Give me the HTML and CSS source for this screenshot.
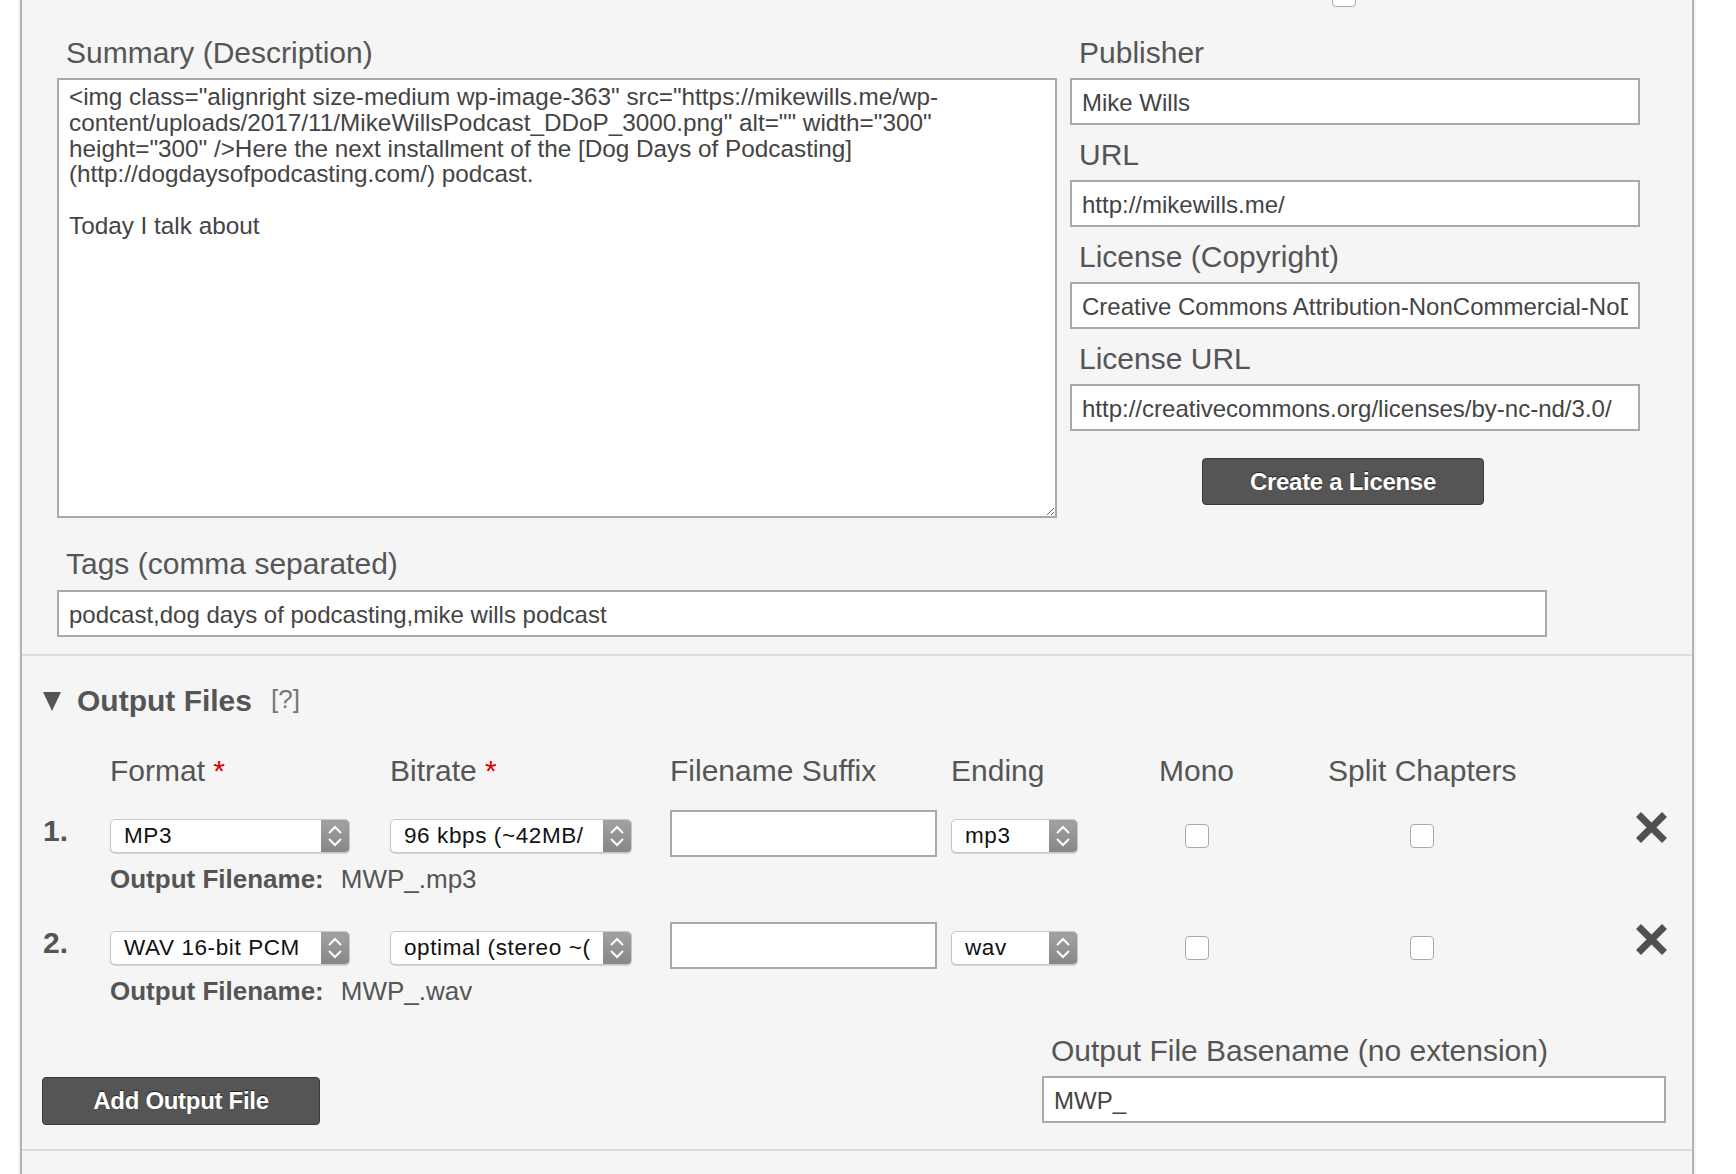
FILE: index.html
```html
<!DOCTYPE html>
<html lang="en">
<head>
<meta charset="utf-8">
<title>Podcast episode settings</title>
<link rel="stylesheet" href="styles.css">
</head>
<body>
<div class="panel">
  <div class="prev-row"><span class="check"></span></div>

  <section class="meta">
    <div class="meta-grid">
      <div class="col-left">
        <label class="lbl">Summary (Description)</label>
        <textarea class="summary">&lt;img class="alignright size-medium wp-image-363" src="https://mikewills.me/wp-
content/uploads/2017/11/MikeWillsPodcast_DDoP_3000.png" alt="" width="300"
height="300" /&gt;Here the next installment of the [Dog Days of Podcasting]
(http://dogdaysofpodcasting.com/) podcast.

Today I talk about</textarea>
      </div>
      <div class="col-right">
        <div class="field">
          <label class="lbl">Publisher</label>
          <input class="txt" type="text" value="Mike Wills">
        </div>
        <div class="field">
          <label class="lbl">URL</label>
          <input class="txt" type="text" value="http://mikewills.me/">
        </div>
        <div class="field">
          <label class="lbl">License (Copyright)</label>
          <input class="txt" type="text" value="Creative Commons Attribution-NonCommercial-NoDerivs 3.0 Unported">
        </div>
        <div class="field">
          <label class="lbl">License URL</label>
          <input class="txt" type="text" value="http://creativecommons.org/licenses/by-nc-nd/3.0/">
        </div>
        <button class="btn btn-license" type="button">Create a License</button>
      </div>
    </div>
    <div class="tags">
      <label class="lbl">Tags (comma separated)</label>
      <input class="txt tags-input" type="text" value="podcast,dog days of podcasting,mike wills podcast">
    </div>
  </section>

  <section class="outputs">
    <h2 class="out-head">
      <svg class="tri" width="18" height="20" viewBox="0 0 18 20"><polygon points="0,1 18,1 9,20" fill="#555"/></svg>
      <span class="out-title">Output Files</span>
      <span class="help">[?]</span>
    </h2>

    <div class="orow ohead">
      <div class="c c-num"></div>
      <div class="c c-fmt">Format <span class="req">*</span></div>
      <div class="c c-bit">Bitrate <span class="req">*</span></div>
      <div class="c c-suf">Filename Suffix</div>
      <div class="c c-end">Ending</div>
      <div class="c c-mono">Mono</div>
      <div class="c c-split">Split Chapters</div>
      <div class="c c-x"></div>
    </div>

    <div class="entry">
      <div class="orow orow-item">
        <div class="c c-num num">1.</div>
        <div class="c c-fmt">
          <div class="sel sel-fmt"><span class="sel-text">MP3</span><span class="sel-arrow"><svg width="28" height="32" viewBox="0 0 28 32"><polyline points="8,13 14,7 20,13" fill="none" stroke="#fff" stroke-width="2"/><polyline points="8,19 14,25 20,19" fill="none" stroke="#fff" stroke-width="2"/></svg></span></div>
        </div>
        <div class="c c-bit">
          <div class="sel sel-bit"><span class="sel-text">96 kbps (~42MB/</span><span class="sel-arrow"><svg width="28" height="32" viewBox="0 0 28 32"><polyline points="8,13 14,7 20,13" fill="none" stroke="#fff" stroke-width="2"/><polyline points="8,19 14,25 20,19" fill="none" stroke="#fff" stroke-width="2"/></svg></span></div>
        </div>
        <div class="c c-suf"><input class="txt suffix" type="text" value=""></div>
        <div class="c c-end">
          <div class="sel sel-end"><span class="sel-text">mp3</span><span class="sel-arrow"><svg width="28" height="32" viewBox="0 0 28 32"><polyline points="8,13 14,7 20,13" fill="none" stroke="#fff" stroke-width="2"/><polyline points="8,19 14,25 20,19" fill="none" stroke="#fff" stroke-width="2"/></svg></span></div>
        </div>
        <div class="c c-mono cb-cell"><span class="check"></span></div>
        <div class="c c-split cb-cell"><span class="check"></span></div>
        <div class="c c-x"><svg class="xicon" width="33" height="33" viewBox="0 0 33 33"><path d="M3.5 3.5 L29.5 29.5 M29.5 3.5 L3.5 29.5" stroke="#505050" stroke-width="7" stroke-linecap="butt"/></svg></div>
      </div>
      <div class="fname"><b>Output Filename:</b><span class="fval">MWP_.mp3</span></div>
    </div>

    <div class="entry entry-2">
      <div class="orow orow-item">
        <div class="c c-num num">2.</div>
        <div class="c c-fmt">
          <div class="sel sel-fmt"><span class="sel-text">WAV 16-bit PCM</span><span class="sel-arrow"><svg width="28" height="32" viewBox="0 0 28 32"><polyline points="8,13 14,7 20,13" fill="none" stroke="#fff" stroke-width="2"/><polyline points="8,19 14,25 20,19" fill="none" stroke="#fff" stroke-width="2"/></svg></span></div>
        </div>
        <div class="c c-bit">
          <div class="sel sel-bit"><span class="sel-text">optimal (stereo ~(</span><span class="sel-arrow"><svg width="28" height="32" viewBox="0 0 28 32"><polyline points="8,13 14,7 20,13" fill="none" stroke="#fff" stroke-width="2"/><polyline points="8,19 14,25 20,19" fill="none" stroke="#fff" stroke-width="2"/></svg></span></div>
        </div>
        <div class="c c-suf"><input class="txt suffix" type="text" value=""></div>
        <div class="c c-end">
          <div class="sel sel-end"><span class="sel-text">wav</span><span class="sel-arrow"><svg width="28" height="32" viewBox="0 0 28 32"><polyline points="8,13 14,7 20,13" fill="none" stroke="#fff" stroke-width="2"/><polyline points="8,19 14,25 20,19" fill="none" stroke="#fff" stroke-width="2"/></svg></span></div>
        </div>
        <div class="c c-mono cb-cell"><span class="check"></span></div>
        <div class="c c-split cb-cell"><span class="check"></span></div>
        <div class="c c-x"><svg class="xicon" width="33" height="33" viewBox="0 0 33 33"><path d="M3.5 3.5 L29.5 29.5 M29.5 3.5 L3.5 29.5" stroke="#505050" stroke-width="7" stroke-linecap="butt"/></svg></div>
      </div>
      <div class="fname"><b>Output Filename:</b><span class="fval">MWP_.wav</span></div>
    </div>

    <div class="out-foot">
      <button class="btn btn-add" type="button">Add Output File</button>
      <div class="basename">
        <label class="lbl">Output File Basename (no extension)</label>
        <input class="txt" type="text" value="MWP_">
      </div>
    </div>
  </section>

  <section class="next"></section>
</div>
</body>
</html>
```

FILE: styles.css
```css
html, body {
  margin: 0;
  padding: 0;
  background: #ffffff;
  overflow: hidden;
}

body {
  font-family: "Liberation Sans", Arial, Helvetica, sans-serif;
  color: #555555;
}

.panel {
  margin-left: 20px;
  width: 1674px;
  box-sizing: border-box;
  border-left: 2px solid #b3b3b3;
  border-right: 2px solid #b3b3b3;
  background: #f5f5f5;
  box-shadow: 1px 0 2px rgba(0, 0, 0, 0.08), -1px 0 2px rgba(0, 0, 0, 0.08);
}

/* cut-off row from above */
.prev-row {
  height: 7px;
  overflow: hidden;
  display: flex;
  align-items: flex-end;
  padding-left: 1310px;
}

.check {
  display: inline-block;
  flex: none;
  width: 24px;
  height: 24px;
  box-sizing: border-box;
  border: 1px solid #a9a9a9;
  border-radius: 4px;
  background: #ffffff;
}

/* ---------- meta section ---------- */
.meta {
  padding: 28px 0 17px 35px;
}

.meta-grid {
  display: flex;
  gap: 13px;
  align-items: flex-start;
}

.col-left {
  width: 1000px;
}

.col-right {
  width: 570px;
  display: flex;
  flex-direction: column;
}

.lbl {
  display: block;
  font-size: 30px;
  line-height: 36px;
  color: #555555;
  padding-left: 9px;
  margin-bottom: 7px;
  white-space: nowrap;
}

.summary {
  display: block;
  width: 1000px;
  height: 440px;
  box-sizing: border-box;
  margin: 0;
  border: 2px solid #a9a9a9;
  padding: 4px 10px;
  font-family: "Liberation Sans", Arial, Helvetica, sans-serif;
  font-size: 24.3px;
  line-height: 25.75px;
  color: #444444;
  background: #ffffff;
  outline: none;
  overflow: hidden;
  resize: both;
}

.txt {
  display: block;
  width: 100%;
  height: 47px;
  box-sizing: border-box;
  margin: 0;
  border: 2px solid #a9a9a9;
  border-radius: 0;
  padding: 2px 10px 0;
  font-family: "Liberation Sans", Arial, Helvetica, sans-serif;
  font-size: 24px;
  color: #444444;
  background: #ffffff;
  outline: none;
}

.field + .field {
  margin-top: 12px;
}

.btn {
  display: block;
  box-sizing: border-box;
  background: #555555;
  border: 1px solid #3a3a3a;
  border-radius: 4px;
  color: #ffffff;
  font-family: "Liberation Sans", Arial, Helvetica, sans-serif;
  font-weight: bold;
  font-size: 24px;
  letter-spacing: -0.3px;
  text-shadow: 0 -1px 1px rgba(0, 0, 0, 0.6);
  padding: 0;
  cursor: pointer;
}

.btn-license {
  width: 282px;
  height: 47px;
  margin-top: 27px;
  margin-left: 132px;
}

.tags {
  margin-top: 28px;
}

.tags .lbl {
  margin-bottom: 8px;
}

.tags-input {
  width: 1490px;
}

/* ---------- output files ---------- */
.outputs {
  border-top: 2px solid #dddddd;
  padding-top: 27px;
}

.out-head {
  display: flex;
  align-items: center;
  margin: 0 0 0 21px;
  height: 36px;
  font-size: 30px;
  line-height: 36px;
  font-weight: bold;
  color: #555555;
}

.tri {
  display: block;
  flex: none;
}

.out-title {
  margin-left: 16px;
}

.help {
  margin-left: 19px;
  font-weight: normal;
  font-size: 26px;
  color: #777777;
  position: relative;
  top: -2px;
}

.orow {
  display: flex;
  align-items: flex-start;
  padding-left: 21px;
}

.ohead {
  margin-top: 34px;
  font-size: 30px;
  line-height: 36px;
  color: #555555;
  white-space: nowrap;
}

.req {
  color: #e00000;
}

.c {
  flex: none;
  box-sizing: border-box;
}

.c-num { width: 67px; }
.c-fmt { width: 280px; }
.c-bit { width: 280px; }
.c-suf { width: 281px; }
.c-end { width: 208px; }
.c-mono { width: 75px; margin-right: 94px; }
.c-split { width: 187px; }
.c-x {
  flex: 1;
  display: flex;
  justify-content: flex-end;
  padding-right: 24px;
}

.entry {
  margin-top: 21px;
}

.entry-2 {
  margin-top: 28.5px;
}

.orow-item {
  height: 47px;
}

.num {
  font-size: 30px;
  line-height: 36px;
  font-weight: bold;
  color: #555555;
  margin-top: 3px;
}

.sel {
  display: flex;
  height: 34px;
  box-sizing: border-box;
  margin-top: 8.5px;
  border: 1px solid #c6c6c6;
  border-radius: 5px;
  background: #ffffff;
  box-shadow: 0 1px 1px rgba(0, 0, 0, 0.15);
  overflow: hidden;
}

.sel-fmt { width: 240px; }
.sel-bit { width: 242px; }
.sel-end { width: 127px; }

.sel-text {
  flex: 1;
  min-width: 0;
  padding: 0 4px 0 13px;
  font-size: 22.5px;
  letter-spacing: 0.6px;
  line-height: 32px;
  color: #111111;
  white-space: nowrap;
}

.sel-arrow {
  flex: none;
  width: 28px;
  height: 32px;
  background: linear-gradient(#a2a2a2, #878787);
}

.sel-arrow svg {
  display: block;
}

.suffix {
  width: 267px;
}

.cb-cell {
  display: flex;
  justify-content: center;
  padding-top: 13.5px;
}

.xicon {
  display: block;
  margin-top: 1px;
}

.fname {
  margin-top: 6.7px;
  padding-left: 88px;
  font-size: 26px;
  line-height: 30px;
  color: #555555;
}

.fname b {
  font-weight: bold;
}

.fval {
  margin-left: 17px;
}

.out-foot {
  margin-top: 27px;
  display: flex;
  justify-content: space-between;
  align-items: flex-start;
  padding: 0 26px 24px 20px;
}

.btn-add {
  width: 278px;
  height: 48px;
  margin-top: 44.6px;
}

.basename {
  width: 624px;
}

.basename .lbl {
  margin-bottom: 7.4px;
}

.next {
  border-top: 2px solid #dddddd;
  height: 40px;
}
```
